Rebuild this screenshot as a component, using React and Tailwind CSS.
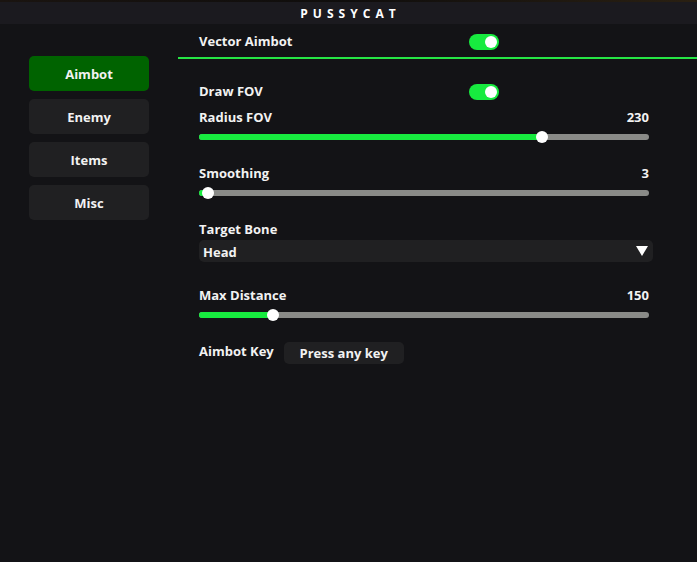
import React from 'react';

const font = { fontFamily: '"Open Sans", "Noto Sans", sans-serif' };

function Toggle() {
  return (
    <div className="flex h-4 w-[30px] items-center justify-end rounded-full bg-[#17eb3f] pr-[2px]">
      <div className="h-3 w-3 rounded-full bg-white" />
    </div>
  );
}

function Slider({ label, value, pct }) {
  return (
    <div className="flex w-[450px] flex-col">
      <div className="flex h-4 items-center justify-between">
        <span>{label}</span>
        <span>{value}</span>
      </div>
      <div className="relative mt-[8px] h-[6px] w-full rounded-full bg-[#8a8b88]">
        <div className="h-full rounded-full bg-[#17eb3f]" style={{ width: `${pct}%` }} />
        <div className="absolute top-1/2 h-3 w-3 -translate-x-1/2 -translate-y-1/2 rounded-full bg-white" style={{ left: `${pct}%` }} />
      </div>
    </div>
  );
}

export default function App() {
  const tabs = ['Aimbot', 'Enemy', 'Items', 'Misc'];
  return (
    <div style={font} className="flex h-[562px] w-[697px] flex-col overflow-hidden bg-[#131316] text-[13px] font-bold text-[#f2f2f2]">
      <div className="h-[2px] bg-gradient-to-r from-[#1a1410] via-[#0f0d0c] to-[#2a2012]" />
      <div className="flex h-[22px] items-center justify-center bg-[#1b1a1f] pt-[2px] pl-[4px] text-[12px] tracking-[0.42em] text-white">PUSSYCAT</div>
      <div className="flex flex-1">
        <div className="flex w-[178px] flex-col gap-2 pl-[29px] pt-8">
          {tabs.map((t, i) => (
            <div key={t} className={`flex h-[35px] w-[120px] items-center justify-center rounded-[5px] pt-[2px] ${i === 0 ? 'bg-[#006300]' : 'bg-[#202022]'}`}>{t}</div>
          ))}
        </div>
        <div className="flex flex-1 flex-col">
          <div className="flex h-[33px] items-center pl-[21px] pt-[2px]">
            <span className="w-[270px]">Vector Aimbot</span>
            <Toggle />
          </div>
          <div className="flex flex-col border-t-2 border-[#26e545] pl-[21px] pt-[25px]">
            <div className="flex h-4 items-center">
              <span className="w-[270px]">Draw FOV</span>
              <Toggle />
            </div>
            <div className="mt-[10px]">
              <Slider label="Radius FOV" value="230" pct={76.2} />
            </div>
            <div className="mt-[26px]">
              <Slider label="Smoothing" value="3" pct={2} />
            </div>
            <div className="mt-[26px] flex h-4 items-center">Target Bone</div>
            <div className="mt-[2px] flex h-[22px] w-[454px] items-center justify-between rounded-[5px] bg-[#202022] pl-1 pr-[5px] pt-[3px]">
              <span>Head</span>
              <svg className="-mt-[3px]" width="12" height="10" viewBox="0 0 12 10"><path d="M0 0h12L6 10z" fill="#fff" /></svg>
            </div>
            <div className="mt-[26px]">
              <Slider label="Max Distance" value="150" pct={16.4} />
            </div>
            <div className="mt-[24px] flex items-center">
              <span className="mt-[-3px]">Aimbot Key</span>
              <div className="ml-[10px] flex h-[22px] w-[120px] items-center justify-center rounded-[5px] bg-[#202022] pt-[2px]">Press any key</div>
            </div>
          </div>
        </div>
      </div>
    </div>
  );
}
